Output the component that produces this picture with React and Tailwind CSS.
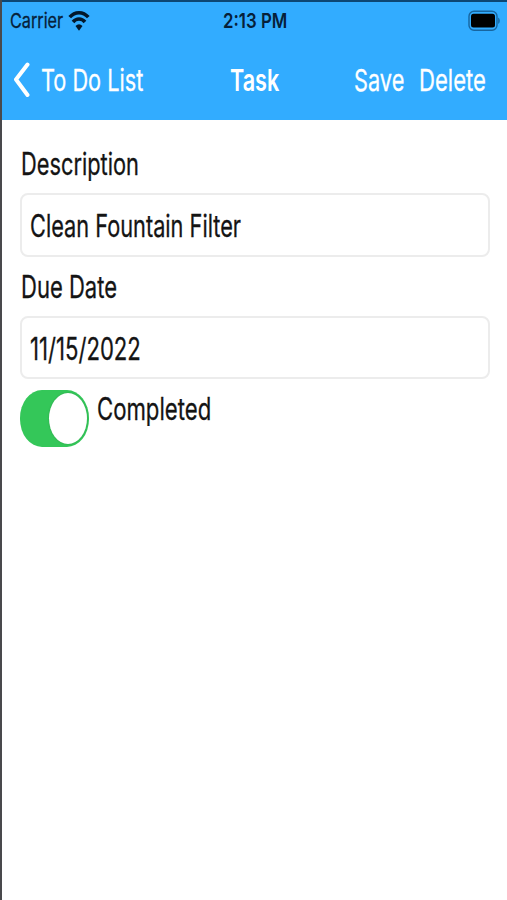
import React, { useLayoutEffect, useRef, useState } from 'react';

// Single line of text condensed horizontally to the given width
const FitText = ({ width, className = '', children }) => {
  const ref = useRef(null);
  const [scale, setScale] = useState(1);

  useLayoutEffect(() => {
    setScale(width / ref.current.offsetWidth);
  }, [width, children]);

  return (
    <div className={`shrink-0 whitespace-nowrap ${className}`} style={{ width }}>
      <span
        ref={ref}
        className="inline-block origin-left"
        style={{ transform: `scaleX(${scale})` }}
      >
        {children}
      </span>
    </div>
  );
};

const WifiIcon = () => (
  <svg width="22" height="22" viewBox="0 0 22 22" fill="none" stroke="#03182b" strokeWidth="3.5">
    <path d="M1.7 7.2C6.8 1.2 15.2 1.2 20.3 7.2" />
    <path d="M5 12C8.4 8 13.6 8 17 12" />
    <path d="M7.5 16Q11 12.5 14.5 16L11 20.8Z" fill="#03182b" stroke="none" />
  </svg>
);

const BatteryIcon = () => (
  <svg width="32" height="22" viewBox="0 0 32 22" fill="none">
    <rect x="1" y="1.2" width="28" height="19" rx="5" stroke="#17659f" strokeWidth="1.4" />
    <rect x="3" y="3.8" width="24" height="13.8" rx="2.5" fill="#000" />
    <path d="M30.2 7.5Q31.8 8.5 31.8 10.7T30.2 14Z" fill="#17659f" />
  </svg>
);

const App = () => {
  const [completed, setCompleted] = useState(true);

  return (
    <div className="h-screen w-full overflow-hidden border-l-2 border-[#49494c] bg-white font-['Inter',sans-serif] text-[30.5px] leading-10 text-[#141414] [-webkit-text-stroke:0.3px]">
      <header className="-ml-0.5 h-[120px] border-t-2 border-l-2 border-t-[#0c4674] border-l-[#235a85] bg-[#32acff]">
        <div className="flex h-[38px] items-center pl-2 text-[20.5px] text-[#062039]">
          <FitText width={53}>Carrier</FitText>
          <div className="ml-[5px]">
            <WifiIcon />
          </div>
          <FitText width={64} className="ml-[133px] font-semibold [-webkit-text-stroke:0px]">2:13 PM</FitText>
          <div className="mr-[7px] ml-auto">
            <BatteryIcon />
          </div>
        </div>
        <nav className="flex h-20 items-center pl-[11px] text-[30px] text-white">
          <svg width="17" height="36" viewBox="0 0 17 36" fill="none" stroke="white" strokeWidth="4" strokeLinecap="round" strokeLinejoin="round">
            <path d="M14.5 2.5L3 17.5L14.5 33" />
          </svg>
          <FitText width={102} className="ml-[11px]">To Do List</FitText>
          <FitText width={49} className="ml-[87px] font-semibold [-webkit-text-stroke:0px]">Task</FitText>
          <FitText width={50} className="ml-[75px]">Save</FitText>
          <FitText width={67} className="ml-[15px]">Delete</FitText>
        </nav>
      </header>

      <main className="flex flex-col pt-6 pr-[17px] pl-[18px]">
        <FitText width={118} className="ml-px">Description</FitText>
        <div className="mt-[9px] flex h-16 items-center rounded-lg border-2 border-[#ececec] pt-0.5 pl-2">
          <FitText width={211}>Clean Fountain Filter</FitText>
        </div>
        <FitText width={96} className="mt-[10px] ml-px">Due Date</FitText>
        <div className="mt-[9px] flex h-[63px] items-center rounded-lg border-2 border-[#ececec] pt-0.5 pl-2">
          <FitText width={111}>11/15/2022</FitText>
        </div>
        <div className="mt-[10px] flex">
          <button
            type="button"
            className={`mt-px flex h-[57px] w-[69px] items-center rounded-[22px/28px] px-0.5 ${completed ? 'justify-end bg-[#34c759]' : 'justify-start bg-gray-200'}`}
            onClick={() => setCompleted(!completed)}
          >
            <span className="h-[51px] w-[38px] rounded-[50%] bg-white shadow-[0_0_2px_rgba(0,0,0,0.2)]"></span>
          </button>
          <FitText width={114} className="ml-2">Completed</FitText>
        </div>
      </main>
    </div>
  );
};

export default App;
